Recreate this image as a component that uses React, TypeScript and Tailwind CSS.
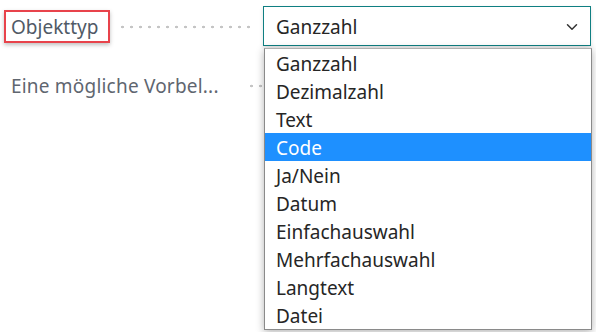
import { ChevronDown } from "lucide-react";

const options = [
  "Ganzzahl",
  "Dezimalzahl",
  "Text",
  "Code",
  "Ja/Nein",
  "Datum",
  "Einfachauswahl",
  "Mehrfachauswahl",
  "Langtext",
  "Datei",
];

function Dots({ className = "" }: { className?: string }) {
  return (
    <div
      className={
        "h-[4px] bg-[radial-gradient(circle,#c4c4c4_1.1px,transparent_1.6px)] bg-[length:9px_4px] bg-repeat-x " +
        className
      }
    />
  );
}

export default function App() {
  return (
    <div className="relative w-[596px] h-[332px] bg-white overflow-hidden font-['Noto_Sans','Open_Sans',sans-serif] text-[19px]">
      {/* field rows */}
      <div className="flex flex-col">
        <div className="flex items-center h-[40px] mt-[6px]">
          <div className="ml-[4px] w-[106px] h-[33px] flex items-center border-[2.5px] border-[#e8434b] shadow-[0_2px_4px_rgba(0,0,0,0.25)] pl-[5px] pt-[2px] text-[#505a66]">
            Objekttyp
          </div>
          <Dots className="w-[136px] ml-[8px] mt-[2px]" />
          <div className="ml-[9px] w-[328px] h-[40px] border border-[#0f7f82] flex items-center justify-between pl-[12px] pr-[9px] text-[#262626] shadow-[0_2px_4px_rgba(0,0,0,0.12)]">
            <span className="pt-[3px]">Ganzzahl</span>
            <ChevronDown size={18} strokeWidth={2} className="text-[#333] mt-[1px]" />
          </div>
        </div>
        <div className="flex items-center h-[40px] mt-[20px]">
          <span className="ml-[11px] w-[236px] text-[#5f6670] whitespace-nowrap tracking-[0.2px]">Eine mögliche Vorbel...</span>
          <Dots className="w-[20px]" />
        </div>
      </div>

      {/* dropdown list */}
      <ul className="absolute left-[264px] top-[48px] w-[328px] bg-white border border-[#8a8a8a] border-t-[#b0b0b0] shadow-[0_2px_8px_rgba(0,0,0,0.3)]">
        {options.map((o) => (
          <li
            key={o}
            className={
              "h-[28px] flex items-center pl-[11px] pt-[3px] " +
              (o === "Code" ? "bg-[#1e90ff] text-white" : "text-[#262626]")
            }
          >
            {o}
          </li>
        ))}
      </ul>
    </div>
  );
}
